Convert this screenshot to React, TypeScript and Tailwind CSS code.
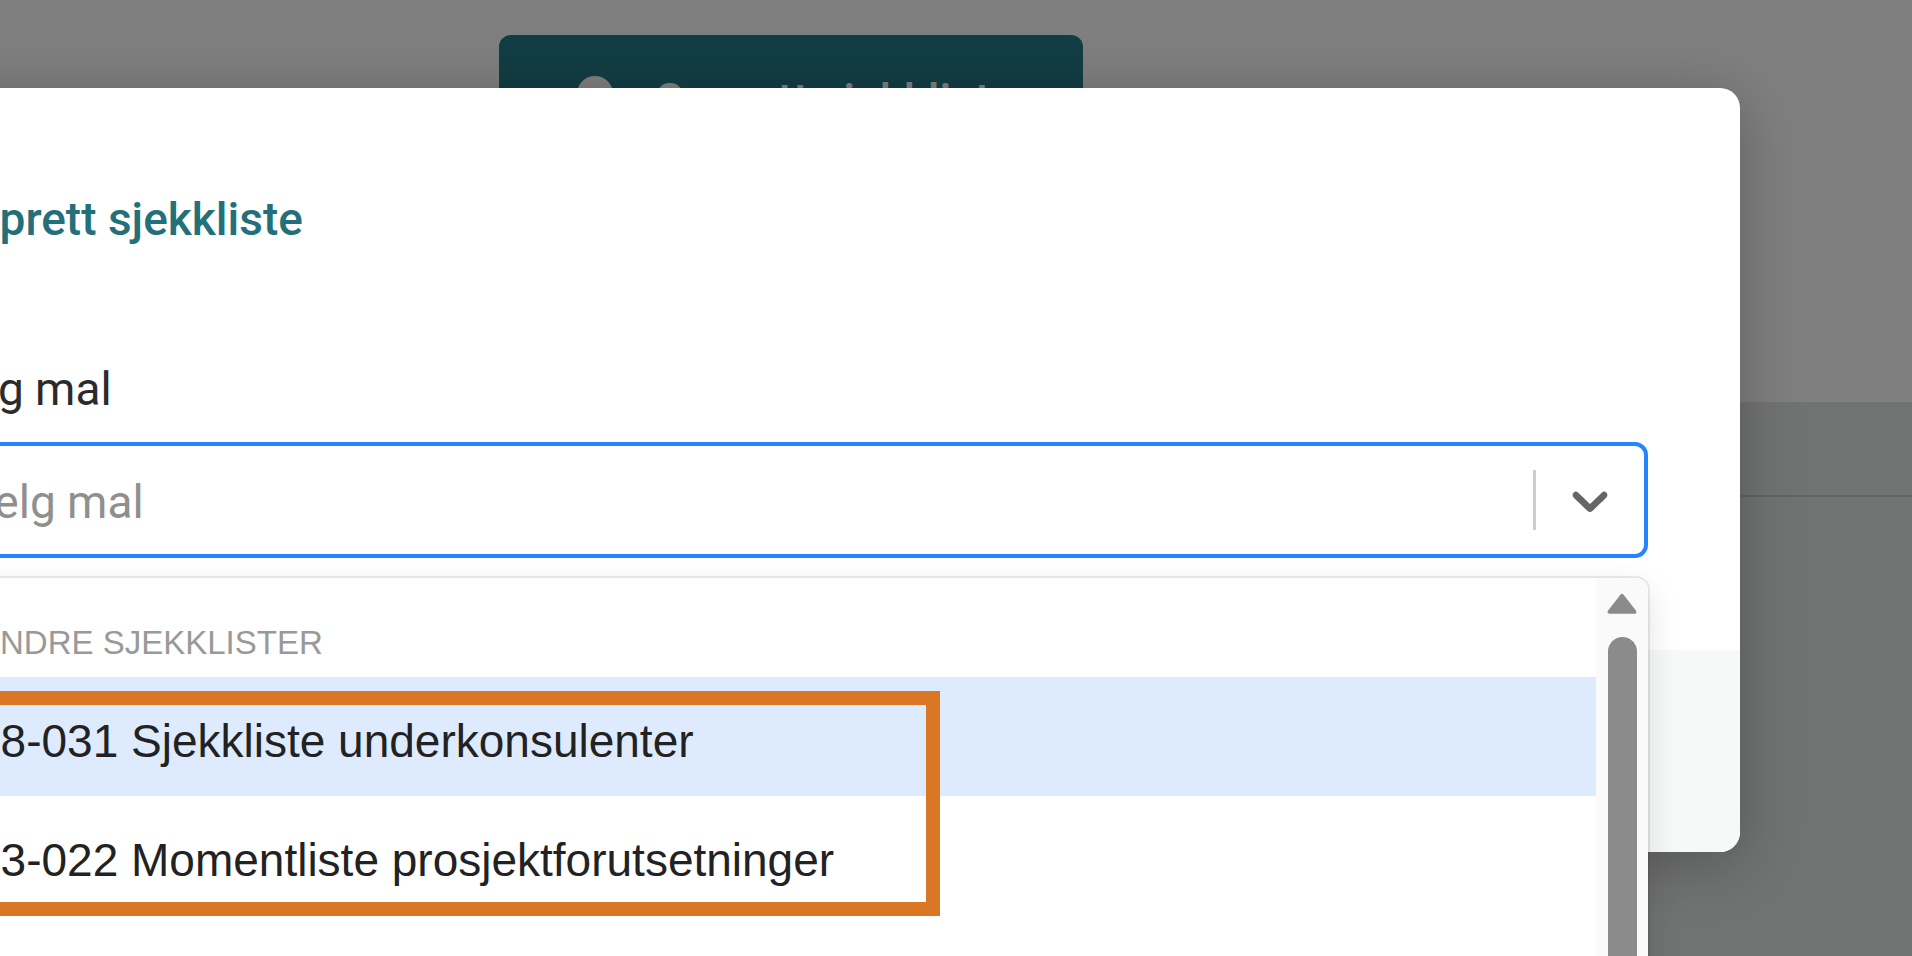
import React from 'react';

const options = [
    '08-031 Sjekkliste underkonsulenter',
    '03-022 Momentliste prosjektforutsetninger',
    '05-014 Sjekkliste oppstart',
];

function Chevron() {
    return (
        <svg width="60" height="60" viewBox="0 0 20 20" fill="#666666">
            <path d="M4.516 7.548c0.436-0.446 1.043-0.481 1.576 0l3.908 3.747 3.908-3.747c0.533-0.481 1.141-0.446 1.574 0 0.436 0.445 0.408 1.197 0 1.615-0.406 0.418-4.695 4.502-4.695 4.502-0.217 0.223-0.502 0.335-0.787 0.335s-0.57-0.112-0.789-0.335c0 0-4.287-4.084-4.695-4.502s-0.436-1.17 0-1.615z" />
        </svg>
    );
}

export default function App() {
    return (
        <div className="relative w-[1912px] h-[956px] overflow-hidden bg-white font-['Roboto',sans-serif]">
            {/* siden bak modalen */}
            <div className="h-[402px] bg-white pl-[499px] pt-[35px]">
                <div className="w-[584px] h-[130px] rounded-[12px] bg-[#247a88] flex items-start pl-[78px] pt-[41px] gap-[41px]">
                    <div className="w-[36px] h-[36px] rounded-full bg-white shrink-0" />
                    <span className="text-[46px] leading-none font-medium text-white pt-[1px]">Opprett sjekkliste</span>
                </div>
            </div>
            <div className="h-[554px] bg-[#e3e6e5]">
                <div className="h-[95px] border-b-2 border-[#c3c8d0]" />
            </div>

            {/* overlay */}
            <div className="absolute inset-0 bg-black/50" />

            {/* modal */}
            <div className="absolute left-[-150px] top-[88px] w-[1890px] h-[764px] rounded-[20px] bg-white shadow-[0_10px_60px_rgba(0,0,0,0.25)] flex flex-col">
                <div className="flex-1 px-[92px] pt-[108px]">
                    <h2 className="text-[46px] leading-none font-medium text-[#23707a]">Opprett sjekkliste</h2>
                    <label className="block mt-[124px] -ml-[8px] text-[46px] leading-none text-[#2b2b2b]">Velg mal</label>

                    <div className="relative mt-[30px]">
                        <div className="h-[116px] border-[4px] border-[#2684ff] rounded-[13px] flex items-center bg-white">
                            <div className="flex-1 pl-[20px] pt-[3px] text-[46px] leading-none text-[#8f8f8f]">Velg mal</div>
                            <span className="w-[3px] self-stretch my-[24px] bg-[#cccccc]" />
                            <div className="px-[24px] flex items-center">
                                <Chevron />
                            </div>
                        </div>

                        {/* meny */}
                        <div className="absolute left-0 right-0 top-[136px] h-[420px] rounded-[12px] bg-white flex overflow-hidden shadow-[0_0_0_2px_rgba(0,0,0,0.08),0_12px_33px_rgba(0,0,0,0.12)] font-['Liberation_Sans',Arial,sans-serif]">
                            <div className="flex-1 pt-[48px]">
                                <div className="pl-[36px] h-[33px] text-[33px] leading-none uppercase text-[#999999]">Andre sjekklister</div>
                                <div className="mt-[18px]">
                                    {options.map((o, i) => (
                                        <div
                                            key={o}
                                            className={
                                                i === 0
                                                    ? 'h-[119px] pl-[33px] pt-[41px] text-[46px] leading-none text-[#222222] bg-[#deebff]'
                                                    : 'h-[119px] pl-[33px] pt-[41px] text-[46px] leading-none text-[#222222]'
                                            }
                                        >
                                            {o}
                                        </div>
                                    ))}
                                </div>
                            </div>
                            <div className="w-[52px] bg-[#fafafa] flex flex-col items-center pt-[15px]">
                                <svg width="32" height="24" viewBox="0 0 32 24">
                                    <polygon points="16,3 30,21 2,21" fill="#8b8b8b" stroke="#8b8b8b" strokeWidth="4" strokeLinejoin="round" />
                                </svg>
                                <div className="mt-[22px] w-[29px] h-[400px] rounded-full bg-[#8b8b8b]" />
                            </div>
                        </div>
                    </div>
                </div>
                <div className="h-[202px] bg-[#f7f8f8] rounded-b-[20px]" />
            </div>

            {/* markering */}
            <div className="absolute left-[-100px] top-[691px] w-[1040px] h-[225px] border-[14px] border-[#d97724]" />
        </div>
    );
}
